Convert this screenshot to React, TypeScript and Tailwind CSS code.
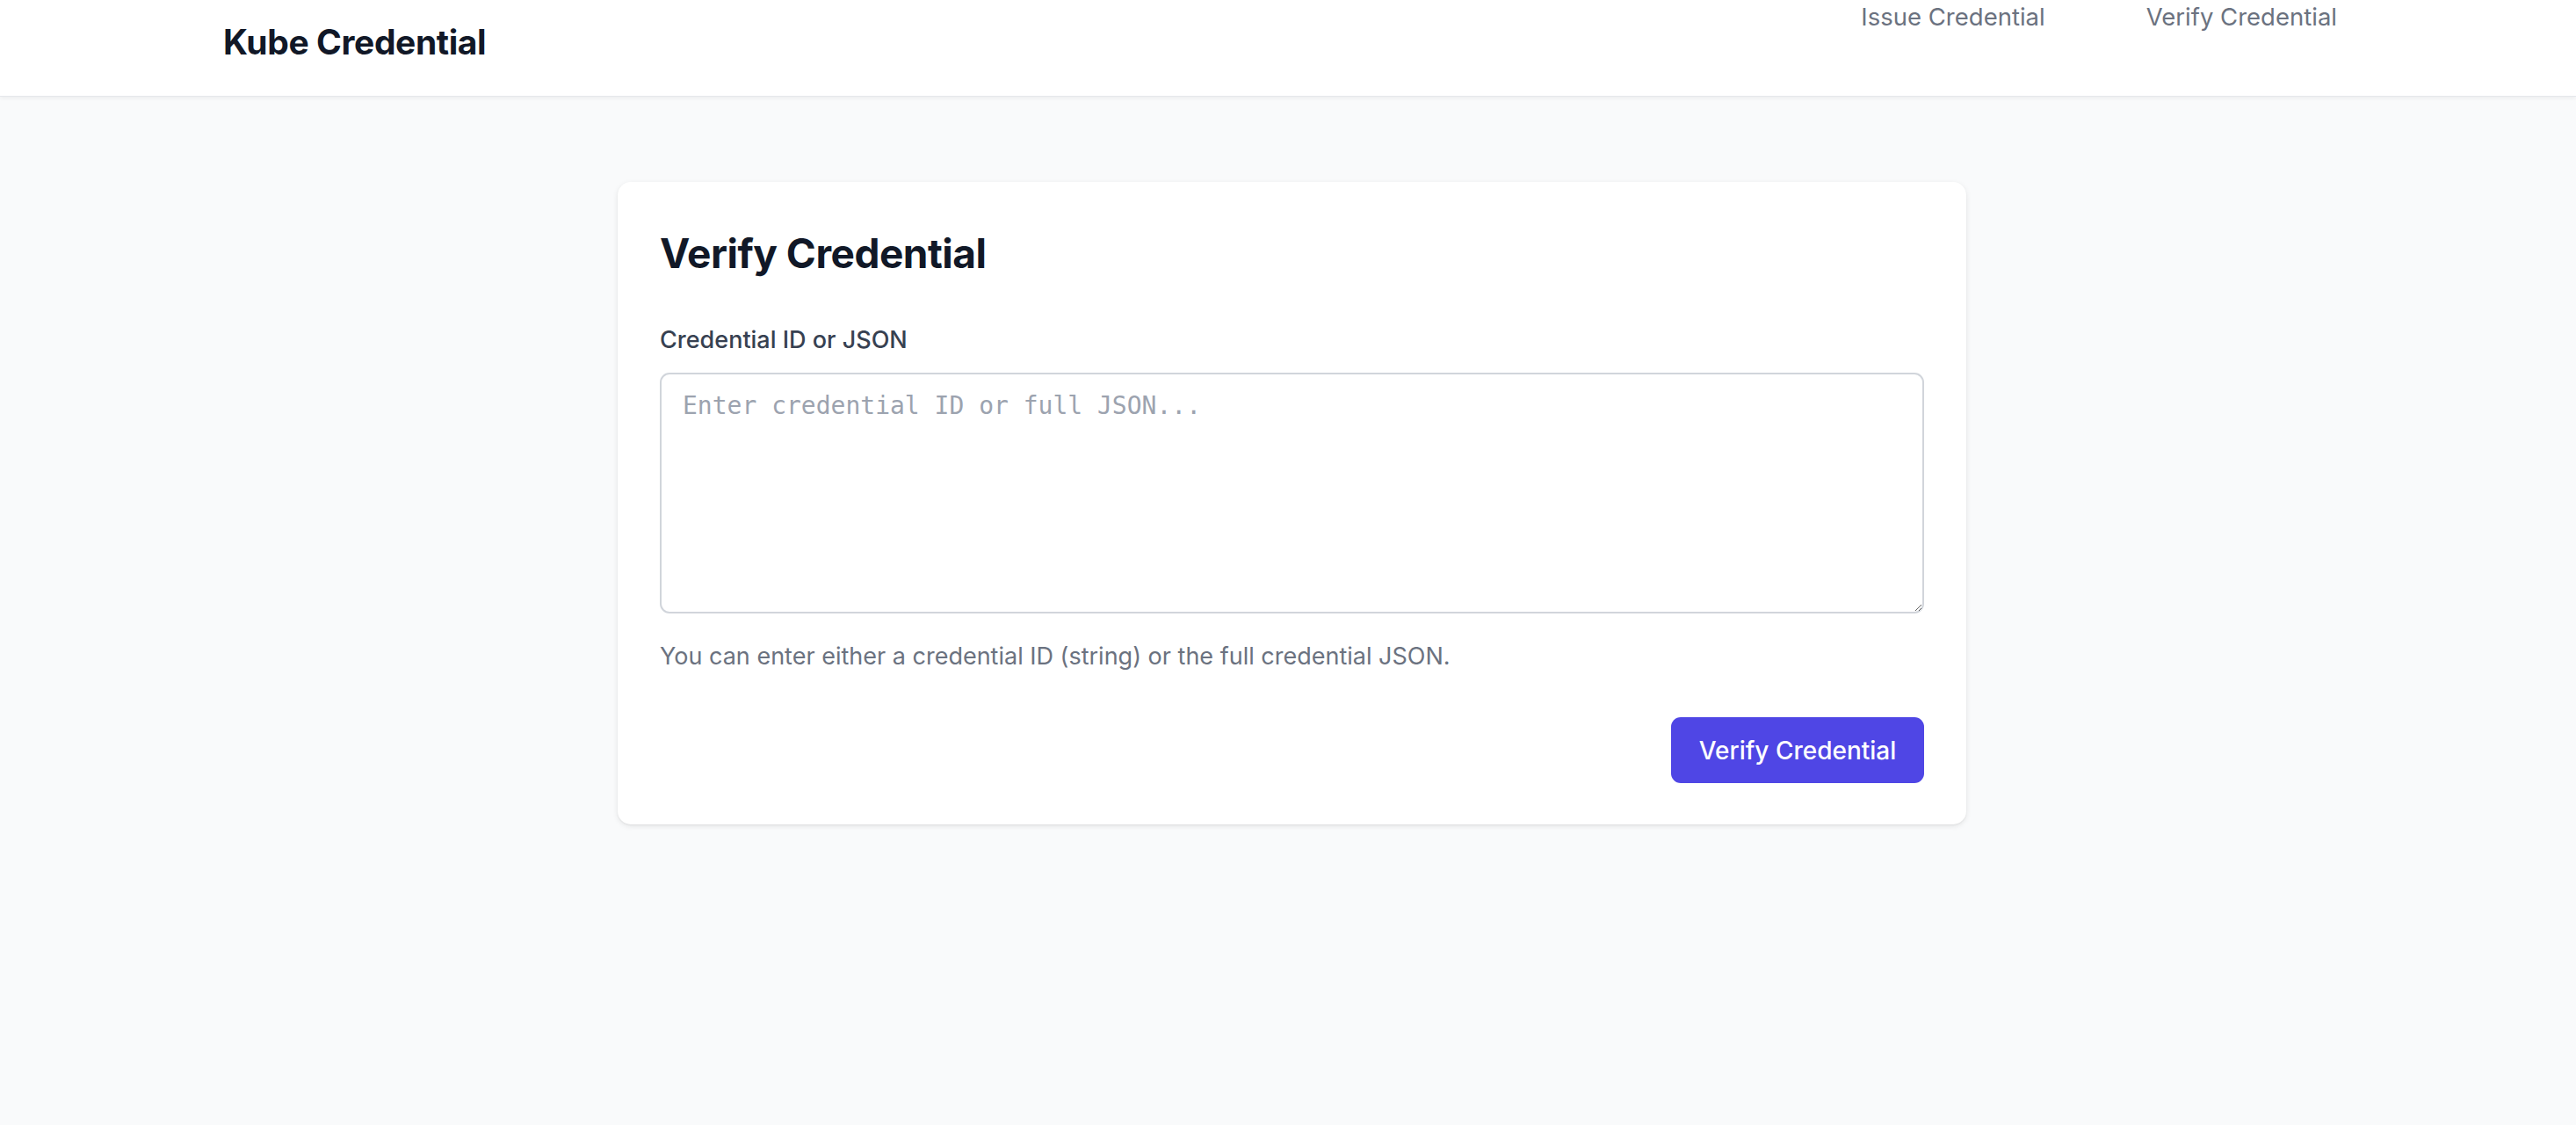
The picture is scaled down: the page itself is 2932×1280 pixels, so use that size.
import React from "react";

export default function App() {
  return (
    <div
      className="min-h-screen bg-[#f9fafb] text-[#111827]"
      style={{ fontFamily: "Inter, 'Noto Sans', sans-serif" }}
    >
      <header className="h-[110px] bg-white border-b border-[#e5e7eb] shadow-[0_2px_4px_rgba(0,0,0,0.05)]">
        <div className="flex justify-between pl-[254px] pr-[272px]">
          <div className="pt-[28px] text-[39px] leading-[39px] font-bold tracking-[-0.4px] text-[#111827]">
            Kube Credential
          </div>
          <nav className="flex gap-[115px] pt-[4px] text-[27.5px] leading-[30px] text-[#6b7280]">
            <a className="cursor-pointer">Issue Credential</a>
            <a className="cursor-pointer">Verify Credential</a>
          </nav>
        </div>
      </header>

      <main className="pt-[97px] pb-[60px]">
        <div className="ml-[703px] w-[1535px] bg-white rounded-[15px] shadow-[0_2px_6px_rgba(0,0,0,0.09),0_1px_2px_rgba(0,0,0,0.05)] px-[48px] pt-[51px] pb-[47px]">
          <h1 className="text-[46px] leading-[60px] font-bold tracking-[-0.5px] text-[#111827]">
            Verify Credential
          </h1>
          <label className="block mt-[50px] mb-[19px] text-[27px] leading-[37px] font-medium text-[#374151]">
            Credential ID or JSON
          </label>
          <textarea
            className="block w-full h-[274px] rounded-[11px] border-2 border-[#d1d5db] px-[24px] py-[15px] text-[28px] leading-[42px] text-[#111827] placeholder:text-[#9ca3af] outline-none"
            style={{ fontFamily: "'DejaVu Sans Mono', monospace" }}
            placeholder="Enter credential ID or full JSON..."
          />
          <p className="mt-[30px] text-[27px] leading-[37px] text-[#6b7280]">
            You can enter either a credential ID (string) or the full credential JSON.
          </p>
          <div className="flex justify-end mt-[51px]">
            <button className="flex items-center justify-center h-[75px] w-[288px] rounded-[11px] bg-[#4f46e5] text-white text-[28px] leading-[30px] font-medium">
              Verify Credential
            </button>
          </div>
        </div>
      </main>
    </div>
  );
}
